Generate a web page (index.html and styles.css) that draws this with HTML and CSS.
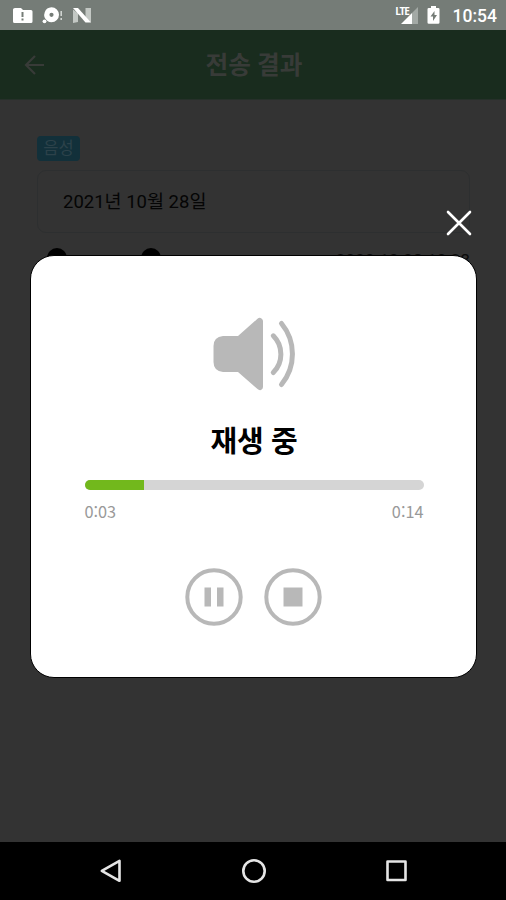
FILE: index.html
```html
<!DOCTYPE html>
<html lang="ko">
<head>
<meta charset="utf-8">
<title>전송 결과</title>
<link rel="stylesheet" href="styles.css">
</head>
<body>
<div class="screen">
  <div class="status">
    <svg class="status-left" width="100" height="30" viewBox="0 0 100 30">
      <path fill="#fff" fill-rule="evenodd" d="M15 8h6l2 2h8q1.500 0 1.500 1.500v10q0 1.500-1.500 1.500H14.500q-1.500 0-1.500-1.500V9.500Q13 8 15 8ZM21.500 12v5h2v-5ZM21.500 18.500v2h2v-2Z"/>
      <path fill="#fff" fill-rule="evenodd" d="M51.500 7.300a7.500 7.500 0 1 1 0 15 7.500 7.500 0 0 1-4-1.200l-.8-.8a7.500 7.500 0 0 1 4.800-13ZM51.500 12.700a2.100 2.100 0 1 0 0 4.200 2.100 2.100 0 0 0 0-4.200Z"/>
      <circle cx="44.500" cy="21.300" r="1.900" fill="#fff"/>
      <path stroke="#d5d9d6" stroke-width="1.500" d="M61.200 11v5M61.200 18v2"/>
      <path fill="#c3c8c4" d="M73 9.500l5 4V22l-5 1ZM85.500 8H91v14.500l-5.500-4Z"/>
      <path fill="#fff" d="M73 8h5l13 14.500h-5.500Z"/>
    </svg>
    <div class="status-right">
      <span class="lte">LTE</span>
      <svg width="46" height="30" viewBox="0 0 46 30">
        <path fill="#a3a9a5" d="M21 7V24H15V13Z"/>
        <path fill="#fff" d="M15 13v11H4Z"/>
        <path fill="#fff" fill-rule="evenodd" d="M34 6h5v2h2.200q1.300 0 1.300 1.300v13.200q0 1.300-1.300 1.300h-9.400q-1.300 0-1.300-1.300V9.300Q30.500 8 31.800 8H34ZM37.500 11l-4 5.500h2.500V21l4-6h-2.500Z"/>
      </svg>
      <span class="clock">10:54</span>
    </div>
  </div>
  <header class="appbar">
    <svg class="back" width="22" height="22" viewBox="0 0 22 22"><path d="M20 11H2.500M11 2L2 11l9 9"/></svg>
    <h1>전송 결과</h1>
  </header>
  <main class="content">
    <span class="tag">음성</span>
    <div class="field">2021년 10월 28일</div>
    <div class="meta">
      <div class="dots"><i></i><i></i></div>
      <span>2020.10.28 10:28</span>
    </div>
    <svg class="close" width="26" height="26" viewBox="0 0 26 26"><path d="M2 2l22 22M24 2L2 24"/></svg>
    <section class="modal">
      <svg class="speaker" width="84" height="74" viewBox="0 0 84 74">
        <path fill="#b8b8b8" d="M10 19h15L44.500 1.800Q46.500 0 48.500 1.500 50 2.500 50 4v66q0 2-2 3-2 .5-3.500-1L25 55H10Q.5 54 .5 45V29Q.5 20 10 19Z"/>
        <path class="wave" d="M60.300 18.800A26 26 0 0 1 60.300 55.500M68.500 6.500A48 48 0 0 1 68.500 67.500"/>
      </svg>
      <h2>재생 중</h2>
      <div class="track"><div class="fill"></div></div>
      <div class="times"><span>0:03</span><span>0:14</span></div>
      <div class="controls">
        <svg width="58" height="58" viewBox="0 0 58 58"><circle cx="29" cy="29" r="26.700"/><path d="M19.500 19.500h6.500v19h-6.500ZM32 19.500h6.500v19H32Z"/></svg>
        <svg width="58" height="58" viewBox="0 0 58 58"><circle cx="29" cy="29" r="26.700"/><path d="M19.500 19.500h19v19h-19Z"/></svg>
      </div>
    </section>
  </main>
  <nav class="navbar">
    <svg width="24" height="26" viewBox="0 0 24 26"><path d="M20.500 2.800v20L2.800 12.800Z"/></svg>
    <svg width="26" height="26" viewBox="0 0 26 26"><circle cx="13" cy="13" r="10.700"/></svg>
    <svg width="24" height="26" viewBox="0 0 24 26"><path d="M2.500 3.500h18v18.500h-18Z"/></svg>
  </nav>
</div>
</body>
</html>
```
FILE: styles.css
```css
* { box-sizing: border-box; }
body {
  margin: 0;
  background: #333;
  font-family: Roboto, "Noto Sans CJK KR", sans-serif;
}
.screen {
  width: 506px;
  height: 900px;
  display: flex;
  flex-direction: column;
  overflow: hidden;
}
.status {
  height: 30px;
  flex: none;
  display: flex;
  justify-content: space-between;
  background: #757c77;
  color: #fff;
}
.status-right { display: flex; padding-right: 9px; }
.lte {
  font: 700 10px/10px "Open Sans", sans-serif;
  letter-spacing: -1.2px;
  padding-top: 6px;
  margin-right: -12px;
}
.clock { font-size: 17.5px; font-weight: 500; line-height: 32px; margin-left: 10px; }
.appbar {
  height: 70px;
  flex: none;
  display: flex;
  align-items: center;
  justify-content: center;
  position: relative;
  background: #192c1e;
  border-bottom: 1px solid #26302a;
  color: #383b38;
}
.back {
  position: absolute;
  left: 24px;
  top: 24px;
  fill: none;
  stroke: #383b38;
  stroke-width: 2.2;
}
h1 { margin: 2px 0 0 2px; font-size: 24.7px; line-height: 36px; font-weight: 700; }
.content {
  flex: 1;
  position: relative;
  padding: 36px 36px 0 37px;
  background: #333;
}
.tag {
  display: block;
  width: 43px;
  height: 25px;
  border-radius: 4px;
  background: #12303a;
  color: #2c424a;
  font-size: 16.5px;
  line-height: 25px;
  text-align: center;
}
.field {
  height: 63px;
  margin-top: 9px;
  padding-left: 25px;
  border: 1px solid #2d2f30;
  border-radius: 9px;
  color: #050505;
  font-size: 18.5px;
  line-height: 63px;
}
.meta {
  display: flex;
  justify-content: space-between;
  margin-top: 15px;
  padding-left: 10px;
  color: #0b0b0b;
  font-size: 17.3px;
  line-height: 24px;
}
.dots { display: flex; gap: 74px; }
.dots i { width: 20px; height: 20px; border-radius: 50%; background: #000; }
.close {
  position: absolute;
  left: 446px;
  top: 110px;
  fill: none;
  stroke: #fff;
  stroke-width: 2.6;
  stroke-linecap: round;
}
.modal {
  position: absolute;
  left: 30px;
  top: 155px;
  width: 447px;
  height: 423px;
  padding: 61px 52.5px 0 53.5px;
  display: flex;
  flex-direction: column;
  background: #fff;
  border: 1px solid #000;
  border-radius: 24px;
}
.speaker { margin-left: 128.5px; flex: none; }
.wave { fill: none; stroke: #b8b8b8; stroke-width: 5; stroke-linecap: round; }
h2 {
  margin: 30px 0 0;
  font-size: 29px;
  line-height: 42px;
  font-weight: 700;
  text-align: center;
  color: #000;
}
.track {
  height: 10px;
  margin-top: 17px;
  border-radius: 5px;
  overflow: hidden;
  background: #d5d5d5;
}
.fill { width: 59.5px; height: 10px; background: #72b81c; }
.times {
  display: flex;
  justify-content: space-between;
  margin-top: 9px;
  color: #999;
  font: 16.3px/24px "Noto Sans CJK KR", sans-serif;
}
.controls { display: flex; justify-content: center; gap: 21px; margin-top: 45px; padding-right: 1px; }
.controls path { fill: #b8b8b8; }
.controls circle { fill: none; stroke: #b8b8b8; stroke-width: 4; }
.navbar {
  height: 58px;
  flex: none;
  display: flex;
  align-items: center;
  justify-content: center;
  gap: 118px;
  padding-left: 1px;
  background: #000;
}
.navbar svg { fill: none; stroke: #e5e5e5; stroke-width: 2.6; stroke-linejoin: round; }
```
